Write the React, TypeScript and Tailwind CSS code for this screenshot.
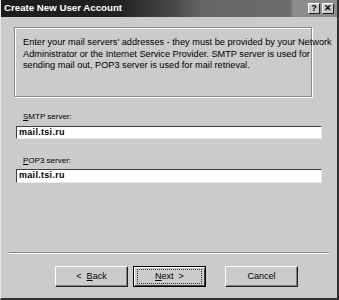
import React from "react";

const font = { fontFamily: '"Liberation Sans", Arial, sans-serif' };

function Btn({ children, focused }: { children: React.ReactNode; focused?: boolean }) {
  return (
    <div
      className={
        "w-[73px] h-[21px] flex items-center justify-center text-[9px] text-black bg-[#cbcbcb] " +
        (focused
          ? "border border-black shadow-[inset_1px_1px_0_#ffffff,inset_-1px_-1px_0_#404040]"
          : "border-t border-l border-t-white border-l-white border-r border-b border-r-[#202020] border-b-[#202020] shadow-[inset_-1px_-1px_0_#808080]")
      }
    >
      {focused ? (
        <div className="w-[65px] h-[15px] border border-dotted border-[#303030] flex items-center justify-center">
          {children}
        </div>
      ) : (
        children
      )}
    </div>
  );
}

const capBtn =
  "w-[12px] h-[11px] bg-[#cbcbcb] flex items-center justify-center text-[9px] font-bold text-black border-t border-l border-white border-r border-b border-r-[#202020] border-b-[#202020] leading-none";

export default function App() {
  return (
    <div
      style={font}
      className="w-[339px] h-[300px] bg-[#cbcbcb] flex flex-col border-l border-l-[#e8e8e8] border-r-2 border-b-2 border-r-[#303030] border-b-[#303030] overflow-hidden"
    >
      <div className="h-[17px] flex items-center justify-between bg-[linear-gradient(to_right,#1c1c1c_0%,#222222_35%,#4a4a4a_52%,#666666_60%,#6c6c6c_86%,#8c8c8c_87%,#8c8c8c_100%)]">
        <span className="text-white font-bold text-[9.7px] pl-[3px]">Create New User Account</span>
        <div className="flex gap-[2px] pr-[3px]">
          <div className={capBtn}>?</div>
          <div className={capBtn}>✕</div>
        </div>
      </div>
      <div className="flex-1 flex flex-col px-[12px]">
        <div className="mt-[10px] ml-[1px] mr-[13px] h-[70px] border border-[#8a8a8a] shadow-[1px_1px_0_#ffffff,inset_1px_1px_0_#ffffff] px-[8px] pt-[9px] text-[9.2px] leading-[11.5px] text-black whitespace-nowrap">
          <div>Enter your mail servers' addresses - they must be provided by your Network</div>
          <div>Administrator or the Internet Service Provider. SMTP server is used for</div>
          <div>sending mail out, POP3 server is used for mail retrieval.</div>
        </div>
        <div className="mt-[14px] pl-[10px] text-[8px] leading-[12px] text-black"><span className="underline">S</span>MTP server:</div>
        <div className="mt-[3px] ml-[3px] mr-[3px] h-[13px] bg-white border-t border-l border-[#404040] border-r border-b border-r-[#e8e8e8] border-b-[#e8e8e8] flex items-center pl-[2px] text-[9px] font-bold text-black tracking-[0.3px]">mail.tsi.ru</div>
        <div className="mt-[16px] pl-[10px] text-[8px] leading-[12px] text-black"><span className="underline">P</span>OP3 server:</div>
        <div className="mt-[2px] ml-[3px] mr-[3px] h-[14px] bg-white border-t border-l border-[#404040] border-r border-b border-r-[#e8e8e8] border-b-[#e8e8e8] flex items-center pl-[2px] text-[9px] font-bold text-black tracking-[0.3px]">mail.tsi.ru</div>
        <div className="flex-1" />
        <div className="-mx-[4px] h-[2px] border-t border-[#8a8a8a] border-b border-b-white" />
        <div className="flex items-center pl-[42px] mt-[12px] mb-[11px]">
          <Btn>
            <span>&lt;&nbsp;&nbsp;<span className="underline">B</span>ack</span>
          </Btn>
          <div className="w-[5px]" />
          <Btn focused>
            <span><span className="underline">N</span>ext&nbsp;&nbsp;&gt;</span>
          </Btn>
          <div className="w-[19px]" />
          <Btn>Cancel</Btn>
        </div>
      </div>
    </div>
  );
}
